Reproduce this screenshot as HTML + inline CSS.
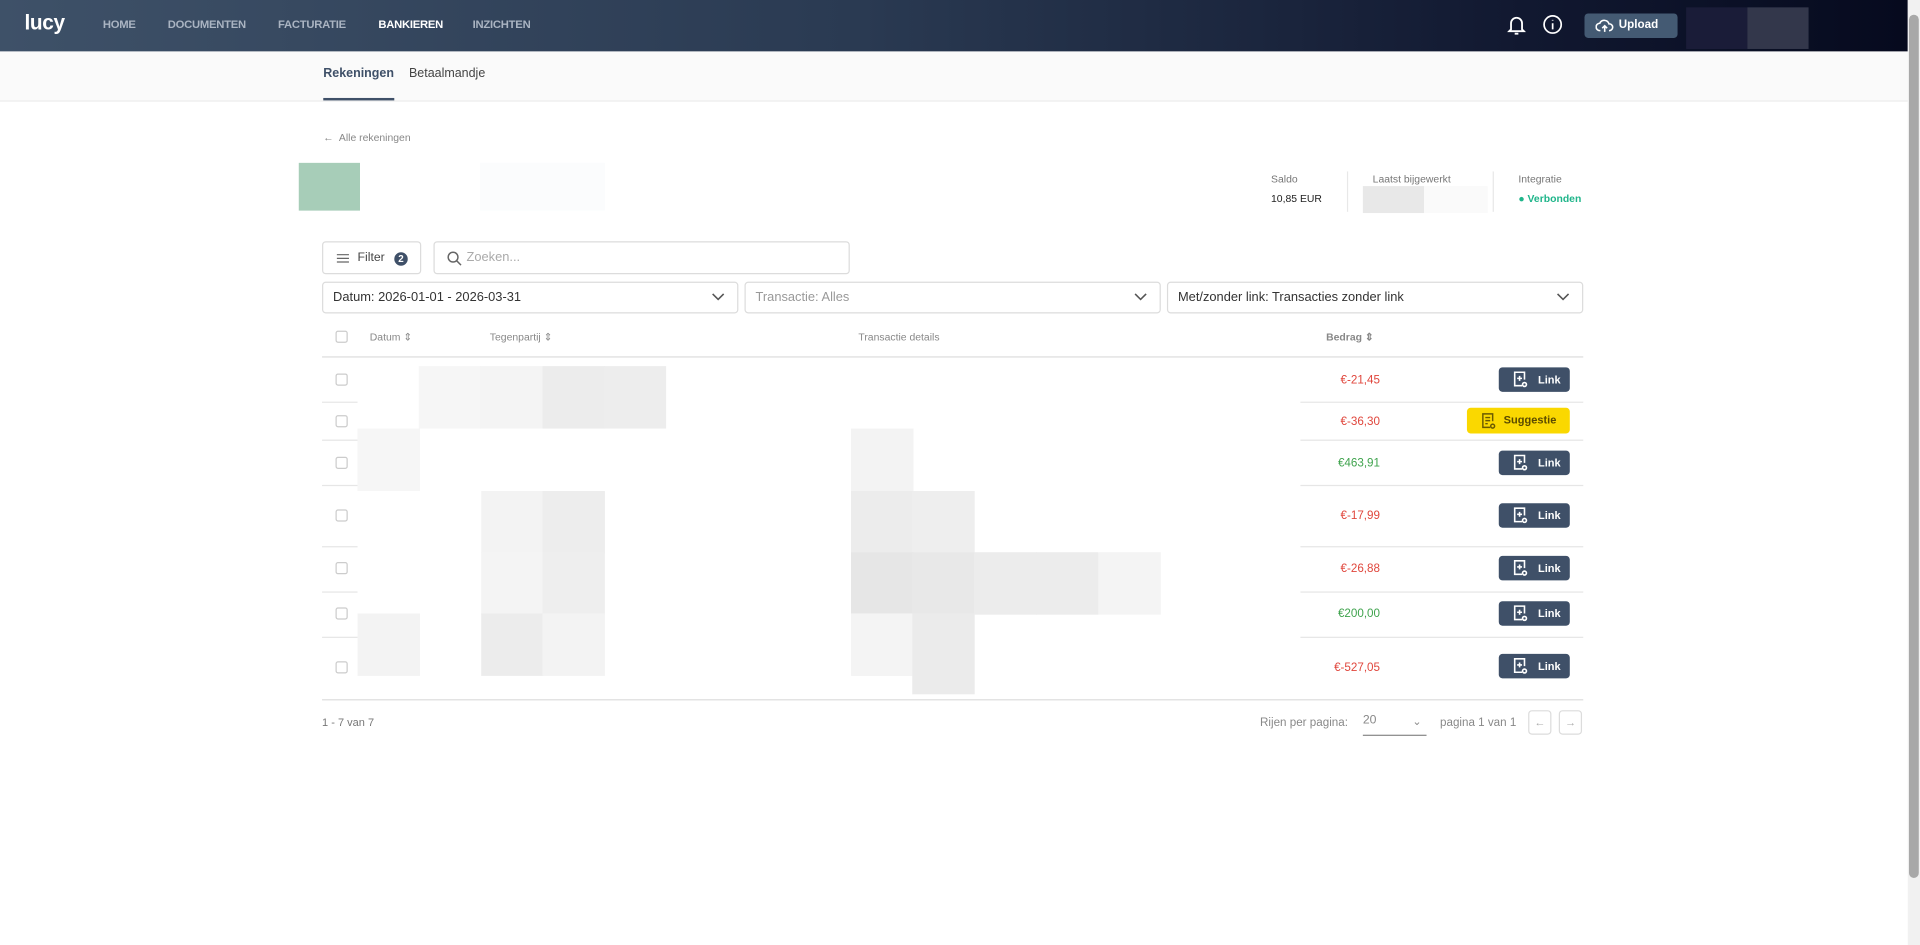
<!DOCTYPE html>
<html><head><meta charset="utf-8"><style>
*{box-sizing:border-box;margin:0;padding:0}
html,body{width:1920px;height:945px;overflow:hidden;background:#fff}
#w{position:absolute;left:0;top:0;width:1568px;height:772px;transform:scale(1.22449);transform-origin:0 0;font-family:"Liberation Sans",sans-serif;color:#333}
.a{position:absolute}
.hdr{left:0;top:0;width:1558px;height:42px;background:linear-gradient(90deg,#3e5168 0%,#2a3a52 45%,#111830 80%,#060a1e 100%)}
.nav{top:15px;font-size:9.2px;font-weight:bold;color:#aab4c2;letter-spacing:-0.2px}
.sub{left:0;top:42px;width:1558px;height:41px;background:#fafafa;border-bottom:1px solid #ececec}
.blk{position:absolute;width:51px;height:51px}
.t{font-size:8.5px;color:#777}
.box{position:absolute;border:1px solid #dcdcdc;border-radius:3px;background:#fff}
.sel{font-size:10.5px;color:#333;padding:6px 8px}
.chev{position:absolute;right:10px;top:8px}
.cb{position:absolute;left:274px;width:10px;height:10px;border:1px solid #ccc;border-radius:2px;background:#fff}
.amt{position:absolute;right:441px;font-size:9.5px}
.red{color:#e0463c}.grn{color:#3fa34d}
.lb{position:absolute;left:1224px;width:58px;height:20px;background:#3f5068;border-radius:3px;color:#fff;font-size:9px;font-weight:bold;line-height:20px;padding-left:32px}
.lb svg{position:absolute;left:11px;top:3px}
.line{position:absolute;height:1px;background:#e6e6e6}
</style></head><body><div id="w">
<div class="a hdr"></div>
<div class="a" style="left:20px;top:9px;font-size:17px;font-weight:bold;color:#fff;letter-spacing:-0.3px">lucy</div>
<div class="a nav" style="left:84px">HOME</div>
<div class="a nav" style="left:137px">DOCUMENTEN</div>
<div class="a nav" style="left:227px">FACTURATIE</div>
<div class="a nav" style="left:309px;color:#fff">BANKIEREN</div>
<div class="a nav" style="left:386px">INZICHTEN</div>
<svg class="a" style="left:1231px;top:12px" width="15" height="17" viewBox="0 0 15 17" fill="none" stroke="#fff" stroke-width="1.5"><path d="M3 12V7a4.5 4.5 0 0 1 9 0v5l1.5 1.5h-12z"/><path d="M6 15.5h3"/></svg>
<svg class="a" style="left:1260px;top:12px" width="16" height="16" viewBox="0 0 16 16" fill="none" stroke="#fff" stroke-width="1.4"><circle cx="8" cy="8" r="7"/><path d="M8 7v5M8 4.2v.6"/></svg>
<div class="a" style="left:1294px;top:11px;width:76px;height:20px;background:#445a73;border-radius:3px;color:#fff;font-size:9.5px;font-weight:bold;line-height:20px;padding-left:28px">Upload</div>
<svg class="a" style="left:1303px;top:15px" width="15" height="12" viewBox="0 0 15 12" fill="none" stroke="#fff" stroke-width="1.3"><path d="M4 10H3.5A3 3 0 0 1 3.5 4 4 4 0 0 1 11 4.5 2.7 2.7 0 0 1 11.5 10H11"/><path d="M7.5 11V6M5.5 8l2-2 2 2"/></svg>
<div class="a" style="left:1377px;top:6px;width:50px;height:34px;background:#1a1c38"></div>
<div class="a" style="left:1427px;top:6px;width:50px;height:34px;background:#33374b"></div>
<div class="a" style="left:1558px;top:0;width:10px;height:772px;background:#f1f1f1"></div>
<div class="a" style="left:1559px;top:12px;width:8px;height:705px;background:#a8a8a8;border-radius:4px"></div>
<div class="a sub"></div>
<div class="a" style="left:264px;top:55px;font-size:10.2px;font-weight:bold;color:#3f5068">Rekeningen</div>
<div class="a" style="left:264px;top:80px;width:58px;height:2px;background:#3f5068"></div>
<div class="a" style="left:334px;top:55px;font-size:10.2px;color:#444">Betaalmandje</div>
<div class="a" style="left:264px;top:107px;font-size:8.5px;color:#888">←&nbsp; Alle rekeningen</div>
<div class="a" style="left:244px;top:133px;width:50px;height:39px;background:#a7cdb8"></div>
<div class="a" style="left:392px;top:133px;width:102px;height:39px;background:#fbfcfd"></div>
<div class="a t" style="left:1038px;top:141px">Saldo</div>
<div class="a" style="left:1038px;top:157px;font-size:8.5px;color:#222">10,85 EUR</div>
<div class="a" style="left:1100px;top:140px;width:1px;height:33px;background:#e8e8e8"></div>
<div class="a t" style="left:1121px;top:141px">Laatst bijgewerkt</div>
<div class="a" style="left:1113px;top:152px;width:50px;height:22px;background:#e8e8e8"></div>
<div class="a" style="left:1163px;top:152px;width:52px;height:22px;background:#fafafa"></div>
<div class="a" style="left:1219px;top:140px;width:1px;height:33px;background:#e8e8e8"></div>
<div class="a t" style="left:1240px;top:141px">Integratie</div>
<div class="a" style="left:1240px;top:157px;font-size:8.5px;font-weight:bold;color:#1fb58a">● Verbonden</div>
<div class="box" style="left:263px;top:197px;width:81px;height:27px"></div>
<svg class="a" style="left:275px;top:206px" width="10" height="10" viewBox="0 0 10 10" stroke="#666" stroke-width="1"><path d="M0 2h10M0 5h10M0 8h10"/></svg>
<div class="a" style="left:292px;top:205px;font-size:10px;color:#444">Filter</div>
<div class="a" style="left:322px;top:206px;width:11px;height:11px;border-radius:50%;background:#3f5068;color:#fff;font-size:8px;font-weight:bold;text-align:center;line-height:11px">2</div>
<div class="box" style="left:354px;top:197px;width:340px;height:27px"></div>
<svg class="a" style="left:365px;top:205px" width="12" height="12" viewBox="0 0 12 12" fill="none" stroke="#666" stroke-width="1.2"><circle cx="5" cy="5" r="4"/><path d="M8 8l3.5 3.5"/></svg>
<div class="a" style="left:381px;top:204px;font-size:10.5px;color:#aaa">Zoeken...</div>
<div class="box sel" style="left:263px;top:230px;width:340px;height:26px">Datum: 2026-01-01 - 2026-03-31<svg class="chev" width="11" height="7" viewBox="0 0 11 7" fill="none" stroke="#555" stroke-width="1.3"><path d="M1 1l4.5 4.5L10 1"/></svg></div>
<div class="box sel" style="left:608px;top:230px;width:340px;height:26px;color:#999">Transactie: Alles<svg class="chev" width="11" height="7" viewBox="0 0 11 7" fill="none" stroke="#555" stroke-width="1.3"><path d="M1 1l4.5 4.5L10 1"/></svg></div>
<div class="box sel" style="left:953px;top:230px;width:340px;height:26px">Met/zonder link: Transacties zonder link<svg class="chev" width="11" height="7" viewBox="0 0 11 7" fill="none" stroke="#555" stroke-width="1.3"><path d="M1 1l4.5 4.5L10 1"/></svg></div>
<div class="cb" style="top:270px"></div>
<div class="a t" style="left:302px;top:270px;color:#888">Datum ⇕</div>
<div class="a t" style="left:400px;top:270px;color:#888">Tegenpartij ⇕</div>
<div class="a t" style="left:701px;top:270px;color:#888">Transactie details</div>
<div class="a t" style="left:1083px;top:270px;color:#888;font-weight:bold">Bedrag ⇕</div>
<div class="line" style="left:263px;top:291px;width:1030px;background:#ddd"></div>
<div class="line" style="left:263px;top:328px;width:29px"></div><div class="line" style="left:1062px;top:328px;width:231px"></div>
<div class="line" style="left:263px;top:359px;width:29px"></div><div class="line" style="left:1062px;top:359px;width:231px"></div>
<div class="line" style="left:263px;top:396px;width:29px"></div><div class="line" style="left:1062px;top:396px;width:231px"></div>
<div class="line" style="left:263px;top:446px;width:29px"></div><div class="line" style="left:1062px;top:446px;width:231px"></div>
<div class="line" style="left:263px;top:483px;width:29px"></div><div class="line" style="left:1062px;top:483px;width:231px"></div>
<div class="line" style="left:263px;top:520px;width:29px"></div><div class="line" style="left:1062px;top:520px;width:231px"></div>
<div class="line" style="left:263px;top:571px;width:1030px;background:#ddd"></div>
<div class="blk" style="left:342px;top:299px;background:#f6f6f6"></div>
<div class="blk" style="left:392px;top:299px;background:#f4f4f4"></div>
<div class="blk" style="left:443px;top:299px;background:#ececec"></div>
<div class="blk" style="left:493px;top:299px;background:#ededed"></div>
<div class="blk" style="left:292px;top:350px;background:#f6f6f6"></div>
<div class="blk" style="left:695px;top:350px;background:#f3f3f3"></div>
<div class="blk" style="left:393px;top:401px;background:#f3f3f3"></div>
<div class="blk" style="left:443px;top:401px;background:#ededed"></div>
<div class="blk" style="left:695px;top:401px;background:#ececec"></div>
<div class="blk" style="left:745px;top:401px;background:#eeeeee"></div>
<div class="blk" style="left:393px;top:451px;background:#f4f4f4"></div>
<div class="blk" style="left:443px;top:451px;background:#eeeeee"></div>
<div class="blk" style="left:695px;top:451px;background:#e6e6e6"></div>
<div class="blk" style="left:745px;top:451px;background:#e8e8e8"></div>
<div class="blk" style="left:796px;top:451px;background:#ececec"></div>
<div class="blk" style="left:846px;top:451px;background:#ececec"></div>
<div class="blk" style="left:897px;top:451px;background:#f4f4f4"></div>
<div class="blk" style="left:292px;top:501px;background:#f3f3f3"></div>
<div class="blk" style="left:393px;top:501px;background:#ececec"></div>
<div class="blk" style="left:443px;top:501px;background:#f3f3f3"></div>
<div class="blk" style="left:695px;top:501px;background:#f4f4f4"></div>
<div class="blk" style="left:745px;top:501px;background:#ebebeb;height:66px"></div>
<div class="cb" style="top:305px"></div><div class="amt red" style="top:305px">€-21,45</div>
<div class="cb" style="top:339px"></div><div class="amt red" style="top:339px">€-36,30</div>
<div class="cb" style="top:373px"></div><div class="amt grn" style="top:373px">€463,91</div>
<div class="cb" style="top:416px"></div><div class="amt red" style="top:416px">€-17,99</div>
<div class="cb" style="top:459px"></div><div class="amt red" style="top:459px">€-26,88</div>
<div class="cb" style="top:496px"></div><div class="amt grn" style="top:496px">€200,00</div>
<div class="cb" style="top:540px"></div><div class="amt red" style="top:540px">€-527,05</div>
<div class="lb" style="top:300px"><svg width="14" height="14" viewBox="0 0 14 14" fill="none" stroke="#fff" stroke-width="1.3"><path d="M8 12H2V1h8v6"/><path d="M6 4v4M4 6h4"/><circle cx="10" cy="11" r="1.6"/></svg>Link</div>
<div class="a" style="left:1198px;top:333px;width:84px;height:21px;background:#fad800;border-radius:3px;color:#5a4a00;font-size:9px;font-weight:bold;line-height:21px;padding-left:30px">Suggestie<svg class="a" style="left:11px;top:4px" width="14" height="14" viewBox="0 0 14 14" fill="none" stroke="#6b5a00" stroke-width="1.2"><path d="M8 12H2V1h8v6M4 4h4M4 6.5h4M4 9h2"/><circle cx="10" cy="11" r="1.6"/></svg></div>
<div class="lb" style="top:368px"><svg width="14" height="14" viewBox="0 0 14 14" fill="none" stroke="#fff" stroke-width="1.3"><path d="M8 12H2V1h8v6"/><path d="M6 4v4M4 6h4"/><circle cx="10" cy="11" r="1.6"/></svg>Link</div>
<div class="lb" style="top:411px"><svg width="14" height="14" viewBox="0 0 14 14" fill="none" stroke="#fff" stroke-width="1.3"><path d="M8 12H2V1h8v6"/><path d="M6 4v4M4 6h4"/><circle cx="10" cy="11" r="1.6"/></svg>Link</div>
<div class="lb" style="top:454px"><svg width="14" height="14" viewBox="0 0 14 14" fill="none" stroke="#fff" stroke-width="1.3"><path d="M8 12H2V1h8v6"/><path d="M6 4v4M4 6h4"/><circle cx="10" cy="11" r="1.6"/></svg>Link</div>
<div class="lb" style="top:491px"><svg width="14" height="14" viewBox="0 0 14 14" fill="none" stroke="#fff" stroke-width="1.3"><path d="M8 12H2V1h8v6"/><path d="M6 4v4M4 6h4"/><circle cx="10" cy="11" r="1.6"/></svg>Link</div>
<div class="lb" style="top:534px"><svg width="14" height="14" viewBox="0 0 14 14" fill="none" stroke="#fff" stroke-width="1.3"><path d="M8 12H2V1h8v6"/><path d="M6 4v4M4 6h4"/><circle cx="10" cy="11" r="1.6"/></svg>Link</div>
<div class="a" style="left:263px;top:585px;font-size:9px;color:#777">1 - 7 van 7</div>
<div class="a" style="left:1029px;top:585px;font-size:9.5px;color:#888">Rijen per pagina:</div>
<div class="a" style="left:1113px;top:583px;width:52px;height:18px;border-bottom:1px solid #888;font-size:10px;color:#888">20<span style="position:absolute;right:4px;top:1px;font-size:9px">⌄</span></div>
<div class="a" style="left:1176px;top:585px;font-size:9.5px;color:#888">pagina 1 van 1</div>
<div class="box" style="left:1248px;top:580px;width:19px;height:20px;font-size:9px;color:#aaa;text-align:center;line-height:18px">←</div>
<div class="box" style="left:1273px;top:580px;width:19px;height:20px;font-size:9px;color:#aaa;text-align:center;line-height:18px">→</div>
</div></body></html>
